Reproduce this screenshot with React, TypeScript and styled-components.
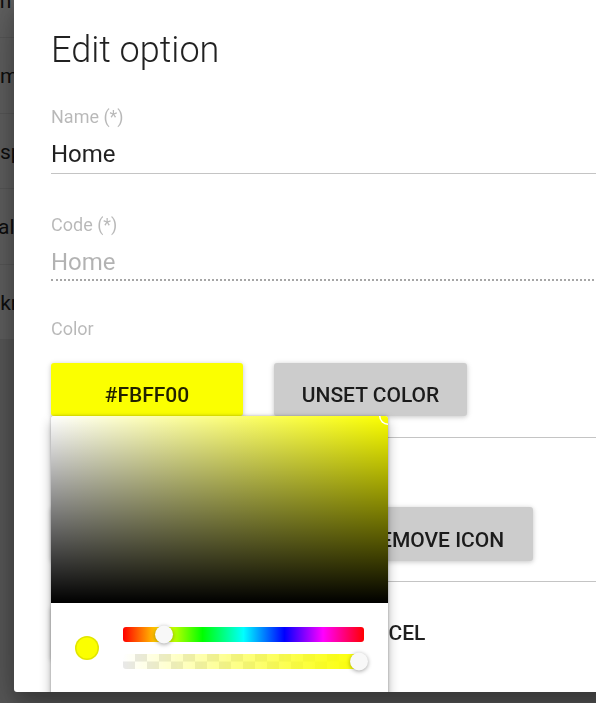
import React from "react";
import styled, { createGlobalStyle } from "styled-components";

const GlobalStyle = createGlobalStyle`
  html, body { margin: 0; padding: 0; width: 100%; height: 100%; overflow: hidden; }
  body { font-family: Roboto, "Noto Sans", Arial, sans-serif; background: #e9e9e9; }
  * { box-sizing: border-box; }
`;

const Page = styled.div`
  width: 100%;
  height: 100%;
`;

const Card = styled.div`
  margin-top: -37.5px;
  background: #ffffff;
`;

const Row = styled.div`
  height: 75.5px;
  border-bottom: 1px solid #e8e8e8;
  display: flex;
  align-items: center;
  padding-top: 2px;
  overflow: hidden;
`;

const RowText = styled.span<{ $offset: number }>`
  margin-left: ${(p) => p.$offset}px;
  font-size: 21px;
  color: #262626;
  white-space: nowrap;
`;

const Overlay = styled.div`
  position: fixed;
  inset: 0;
  background: rgba(0, 0, 0, 0.635);
  z-index: 10;
`;

const Dialog = styled.div`
  position: fixed;
  left: 14px;
  top: 0;
  width: 640px;
  height: 692px;
  z-index: 11;
  background: #ffffff;
  border-radius: 0 0 3px 3px;
  box-shadow: rgba(0, 0, 0, 0.25) 0 14px 45px, rgba(0, 0, 0, 0.22) 0 10px 18px;
  overflow: hidden;
  padding: 32px 0 0 37px;
`;

const Title = styled.h3`
  margin: 0;
  font-size: 36px;
  line-height: 36px;
  font-weight: 300;
  color: rgba(0, 0, 0, 0.87);
`;

const Field = styled.div<{ $top: number }>`
  margin-top: ${(p) => p.$top}px;
  display: flex;
  flex-direction: column;
`;

const Label = styled.label`
  font-size: 18px;
  line-height: 18px;
  color: rgba(0, 0, 0, 0.28);
`;

const Value = styled.div<{ $disabled?: boolean }>`
  margin-top: 16px;
  font-size: 24px;
  line-height: 24px;
  color: ${(p) => (p.$disabled ? "rgba(0,0,0,0.3)" : "rgba(0,0,0,0.87)")};
  padding-bottom: ${(p) => (p.$disabled ? 5 : 7)}px;
  border-bottom: ${(p) => (p.$disabled ? "2px dotted #a6a6a6" : "1px solid #c4c4c4")};
`;

const ButtonRow = styled.div<{ $top: number; $gap: number }>`
  margin-top: ${(p) => p.$top}px;
  display: flex;
  gap: ${(p) => p.$gap}px;
  align-items: flex-start;
`;

const RaisedButton = styled.button<{ $bg: string; $width: number; $height?: number }>`
  width: ${(p) => p.$width}px;
  height: ${(p) => p.$height ?? 53}px;
  border: none;
  border-radius: 3px;
  background: ${(p) => p.$bg};
  font-family: Roboto, "Noto Sans", Arial, sans-serif;
  font-size: 21px;
  font-weight: 500;
  color: rgba(0, 0, 0, 0.87);
  text-transform: uppercase;
  padding: 11px 0 0;
  box-shadow: rgba(0, 0, 0, 0.12) 0 1px 6px, rgba(0, 0, 0, 0.12) 0 1px 4px;
  cursor: pointer;
`;

const FlatButton = styled.button`
  height: 54px;
  border: none;
  background: transparent;
  padding: 0 24px;
  font-family: Roboto, "Noto Sans", Arial, sans-serif;
  font-size: 21px;
  font-weight: 500;
  color: rgba(0, 0, 0, 0.87);
  text-transform: uppercase;
`;

const Divider = styled.div<{ $top: number }>`
  margin-top: ${(p) => p.$top}px;
  height: 1px;
  background: #c4c4c4;
`;

const ColorWrap = styled.div`
  position: relative;
`;

const Picker = styled.div`
  position: absolute;
  top: 100%;
  left: 0;
  width: 337px;
  z-index: 2;
  background: #ffffff;
  border-radius: 3px;
  box-shadow: 0 0 3px rgba(0, 0, 0, 0.3), 0 6px 12px rgba(0, 0, 0, 0.3);
`;

const Saturation = styled.div<{ $hue: number }>`
  position: relative;
  height: 187px;
  overflow: hidden;
  border-radius: 3px 3px 0 0;
  background: linear-gradient(to top, #000 0%, rgba(0, 0, 0, 0) 100%),
    linear-gradient(to right, #fff 0%, rgba(255, 255, 255, 0) 100%),
    hsl(${(p) => p.$hue}, 100%, 50%);
`;

const SatPointer = styled.div`
  position: absolute;
  left: 100%;
  top: 0;
  width: 18px;
  height: 18px;
  border-radius: 50%;
  transform: translate(-9px, -9px);
  box-shadow: inset 0 0 0 1.5px #fff;
`;

const PickerBody = styled.div`
  padding: 24px 24px 18px;
`;

const Controls = styled.div`
  display: flex;
`;

const SwatchCol = styled.div`
  width: 48px;
`;

const Swatch = styled.div<{ $color: string }>`
  margin-top: 9px;
  width: 24px;
  height: 24px;
  border-radius: 50%;
  background: ${(p) => p.$color};
  box-shadow: inset 0 0 0 1.5px rgba(0, 0, 0, 0.1);
`;

const Toggles = styled.div`
  flex: 1;
  display: flex;
  flex-direction: column;
  gap: 12px;
`;

const HueBar = styled.div`
  position: relative;
  height: 15px;
  border-radius: 3px;
  background: linear-gradient(
    to right,
    #f00 0%,
    #ff0 17%,
    #0f0 33%,
    #0ff 50%,
    #00f 67%,
    #f0f 83%,
    #f00 100%
  );
`;

const AlphaBar = styled.div`
  position: relative;
  height: 15px;
  border-radius: 3px;
  background: linear-gradient(to right, rgba(251, 255, 0, 0) 0%, rgba(251, 255, 0, 1) 100%),
    conic-gradient(
        rgba(0, 0, 0, 0.09) 25%,
        transparent 0 50%,
        rgba(0, 0, 0, 0.09) 0 75%,
        transparent 0
      )
      left center / 24px 24px;
`;

const SliderPointer = styled.div<{ $left: number }>`
  position: absolute;
  top: 0;
  left: ${(p) => p.$left}%;
  width: 18px;
  height: 18px;
  border-radius: 50%;
  transform: translate(-9px, -1.5px);
  background: #f8f8f8;
  box-shadow: 0 1px 4px 0 rgba(0, 0, 0, 0.37);
`;

const Fields = styled.div`
  padding-top: 24px;
  display: flex;
  justify-content: center;
`;

const HexInput = styled.input`
  width: 100%;
  height: 32px;
  font-size: 16px;
  border: none;
  text-align: center;
  box-shadow: inset 0 0 0 1px #dadada;
  border-radius: 3px;
  color: #333;
`;

const rows = [
  { text: "Icon", offset: -29 },
  { text: "Home", offset: -27 },
  { text: "Display", offset: -19 },
  { text: "Health", offset: -28 },
  { text: "Unknown", offset: -25 },
];

export default function App() {
  const hue = 61;
  return (
    <>
      <GlobalStyle />
      <Page>
        <Card>
          {rows.map((r) => (
            <Row key={r.text}>
              <RowText $offset={r.offset}>{r.text}</RowText>
            </Row>
          ))}
        </Card>
      </Page>
      <Overlay />
      <Dialog>
        <Title>Edit option</Title>
        <Field $top={40}>
          <Label>Name (*)</Label>
          <Value>Home</Value>
        </Field>
        <Field $top={42}>
          <Label>Code (*)</Label>
          <Value $disabled>Home</Value>
        </Field>
        <Field $top={39}>
          <Label>Color</Label>
        </Field>
        <ButtonRow $top={25} $gap={31}>
          <ColorWrap>
            <RaisedButton $bg="#FBFF00" $width={192}>
              #FBFF00
            </RaisedButton>
            <Picker>
              <Saturation $hue={hue}>
                <SatPointer />
              </Saturation>
              <PickerBody>
                <Controls>
                  <SwatchCol>
                    <Swatch $color="#FBFF00" />
                  </SwatchCol>
                  <Toggles>
                    <HueBar>
                      <SliderPointer $left={(hue / 360) * 100} />
                    </HueBar>
                    <AlphaBar>
                      <SliderPointer $left={97.9} />
                    </AlphaBar>
                  </Toggles>
                </Controls>
                <Fields>
                  <HexInput readOnly value="#FBFF00" />
                </Fields>
              </PickerBody>
            </Picker>
          </ColorWrap>
          <RaisedButton $bg="#cccccc" $width={193}>
            Unset color
          </RaisedButton>
        </ButtonRow>
        <Divider $top={21} />
        <Field $top={39}>
          <Label>Icon</Label>
        </Field>
        <ButtonRow $top={12} $gap={31}>
          <RaisedButton $bg="#cccccc" $width={256} $height={54}>
            Select icon
          </RaisedButton>
          <RaisedButton $bg="#cccccc" $width={195} $height={54}>
            Remove icon
          </RaisedButton>
        </ButtonRow>
        <Divider $top={20} />
        <ButtonRow $top={24} $gap={15}>
          <RaisedButton $bg="#cccccc" $width={256} $height={54}>
            Save
          </RaisedButton>
          <FlatButton>Cancel</FlatButton>
        </ButtonRow>
      </Dialog>
    </>
  );
}
